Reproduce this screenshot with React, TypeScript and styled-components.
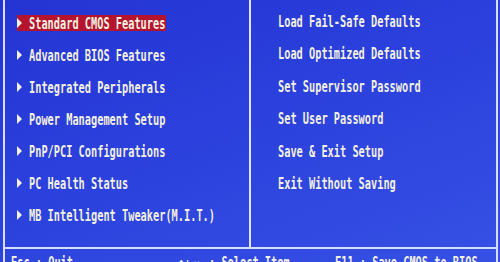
import React from "react";
import styled, { createGlobalStyle } from "styled-components";

const Global = createGlobalStyle`
  html, body { margin: 0; padding: 0; background: #2a3ad6; }
  body { font-family: "DejaVu Sans Mono", "Liberation Mono", monospace; }
`;

const Screen = styled.div`
  width: 500px;
  height: 262px;
  overflow: hidden;
  background: linear-gradient(160deg, #2434d2 0%, #2b40dc 45%, #3650e4 100%);
`;

const Frame = styled.div`
  margin-left: 3px;
  width: 491px;
  height: 262px;
  border-left: 2px solid #d6defc;
  border-right: 2px solid #d6defc;
  display: grid;
  grid-template-rows: 249px 1fr;
`;

const Main = styled.div`
  display: grid;
  grid-template-columns: 246px 1fr;
  border-bottom: 2px solid #d6defc;
`;

const Column = styled.div<{ $left?: boolean }>`
  display: flex;
  flex-direction: column;
  align-items: flex-start;
  padding-top: ${(p) => (p.$left ? "15px" : "13px")};
  padding-left: ${(p) => (p.$left ? "12px" : "27px")};
  gap: ${(p) => (p.$left ? "16px" : "16.4px")};
  ${(p) => (p.$left ? "border-right: 2px solid #dfe6ff;" : "")}
`;

const Row = styled.div<{ $selected?: boolean }>`
  display: inline-flex;
  align-items: center;
  height: 16px;
  padding-right: 1px;
  background: ${(p) => (p.$selected ? "#b4142e" : "transparent")};
`;

const Arrow = styled.span`
  width: 0;
  height: 0;
  border-top: 5px solid transparent;
  border-bottom: 5px solid transparent;
  border-left: 5px solid #f3f1e2;
  margin-right: 7px;
`;

const Label = styled.span`
  display: inline-block;
  font-family: "DejaVu Sans Mono", "Liberation Mono", monospace;
  font-weight: bold;
  font-size: 10.3px;
  line-height: 16px;
  color: #f3f1e2;
  white-space: pre;
  transform: scaleY(1.47);
  transform-origin: center;
`;

const Footer = styled.div`
  display: grid;
  grid-template-columns: 167px 157px 1fr;
  padding-left: 6px;
  padding-top: 5px;
  align-items: start;
`;

const leftItems = [
  "Standard CMOS Features",
  "Advanced BIOS Features",
  "Integrated Peripherals",
  "Power Management Setup",
  "PnP/PCI Configurations",
  "PC Health Status",
  "MB Intelligent Tweaker(M.I.T.)",
];

const rightItems = [
  "Load Fail-Safe Defaults",
  "Load Optimized Defaults",
  "Set Supervisor Password",
  "Set User Password",
  "Save & Exit Setup",
  "Exit Without Saving",
];

export default function App() {
  return (
    <Screen>
      <Global />
      <Frame>
        <Main>
          <Column $left>
            {leftItems.map((t, i) => (
              <Row key={t} $selected={i === 0}>
                <Arrow />
                <Label>{t}</Label>
              </Row>
            ))}
          </Column>
          <Column>
            {rightItems.map((t) => (
              <Row key={t}>
                <Label>{t}</Label>
              </Row>
            ))}
          </Column>
        </Main>
        <Footer>
          <Label>Esc : Quit</Label>
          <Label>{"\u2191\u2193\u2192\u2190 : Select Item"}</Label>
          <Label>F11 : Save CMOS to BIOS</Label>
        </Footer>
      </Frame>
    </Screen>
  );
}
